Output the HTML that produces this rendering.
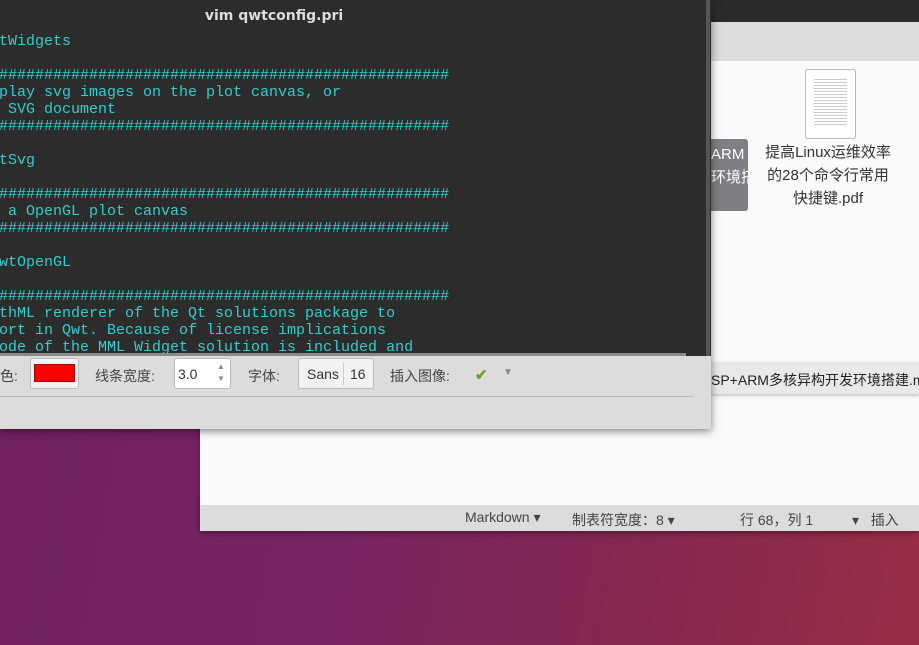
<!DOCTYPE html>
<html><head><meta charset="utf-8"><style>
*{margin:0;padding:0;box-sizing:border-box}
body{width:919px;height:645px;overflow:hidden;position:relative;font-family:"Liberation Sans","Noto Sans CJK SC",sans-serif;background:linear-gradient(100deg,#701f5f 0%,#772462 40%,#86284f 75%,#982f45 100%)}
.abs{position:absolute}
.term{font-family:"Liberation Mono","DejaVu Sans Mono",monospace;font-size:15px;color:#30cfd0;white-space:pre;line-height:17px}
.pt{font-size:14px;color:#444;position:absolute;top:366px}
</style></head><body>
<!-- file manager -->
<div class="abs" style="left:200px;top:0;width:719px;height:531px;background:#fafafa;box-shadow:0 2px 6px rgba(0,0,0,.4)"></div>
<div class="abs" style="left:200px;top:0;width:719px;height:22px;background:#2b2b2b"></div>
<div class="abs" style="left:200px;top:22px;width:719px;height:39px;background:#dcdcdc"></div>
<div class="abs" style="left:711px;top:139px;width:37px;height:72px;background:#7d7f83;border-radius:0 3px 3px 0"></div>
<div class="abs" style="left:711px;top:143px;color:#fff;font-size:15px;line-height:23px;width:37px;overflow:hidden;white-space:nowrap">ARM<br>环境搭</div>
<div class="abs" style="left:805px;top:69px;width:51px;height:70px;background:#fff;border:1px solid #bbb;border-radius:3px">
<div style="margin:7px 8px;height:50px;background:repeating-linear-gradient(#fff 0 2px,#ccc 2px 3px)"></div></div>
<div class="abs" style="left:748px;top:141px;width:160px;text-align:center;font-size:15px;line-height:23px;color:#333">提高Linux运维效率<br>的28个命令行常用<br>快捷键.pdf</div>
<div class="abs" style="left:711px;top:362px;width:208px;height:32px;background:#e9e9e9;box-shadow:0 2px 3px rgba(0,0,0,.2)"></div>
<div class="abs" style="left:711px;top:370px;font-size:14px;color:#222;white-space:nowrap">SP+ARM多核异构开发环境搭建.md</div>
<div class="abs" style="left:200px;top:505px;width:719px;height:26px;background:#dcdcdc"></div>
<div class="abs" style="left:465px;top:509px;font-size:14px;color:#444;white-space:nowrap">Markdown ▾</div>
<div class="abs" style="left:572px;top:510px;font-size:14px;color:#444;white-space:nowrap">制表符宽度：8 ▾</div>
<div class="abs" style="left:740px;top:510px;font-size:14px;color:#444;white-space:nowrap">行 68，列 1</div>
<div class="abs" style="left:852px;top:510px;font-size:14px;color:#444;white-space:nowrap">▾ &nbsp;&nbsp;插入</div>
<!-- terminal window -->
<div class="abs" style="left:0;top:0;width:711px;height:429px;background:#dcdcdc;box-shadow:0 2px 8px rgba(0,0,0,.5)"></div>
<div class="abs" style="left:0;top:0;width:711px;height:356px;background:#2c2c2c"></div>
<div class="abs" style="left:706px;top:0;width:4px;height:356px;background:#555"></div>
<div class="abs" style="left:0;top:8px;width:548px;text-align:center;font-weight:bold;font-size:14px;color:#ddd;font-family:'DejaVu Sans',sans-serif">vim qwtconfig.pri</div>
<div class="abs term" style="left:-1px;top:33px">tWidgets

##################################################
play svg images on the plot canvas, or
 SVG document
##################################################

tSvg

##################################################
 a OpenGL plot canvas
##################################################

wtOpenGL

##################################################
thML renderer of the Qt solutions package to
ort in Qwt. Because of license implications
ode of the MML Widget solution is included and</div>
<div class="abs" style="left:0;top:353px;width:686px;height:3px;background:#8a8a8a"></div>
<div class="abs" style="left:0;top:356px;width:711px;height:73px;background:#dcdcdc"></div>
<div class="pt" style="left:0">色:</div>
<div class="abs" style="left:30px;top:358px;width:49px;height:31px;background:#f2f2f2;border:1px solid #bbb;border-radius:3px"><div style="margin:5px 3px;height:18px;background:#f00;border:1px solid #a00"></div></div>
<div class="pt" style="left:95px">线条宽度:</div>
<div class="abs" style="left:174px;top:358px;width:57px;height:31px;background:#fff;border:1px solid #bbb;border-radius:3px;font-size:14px;color:#333;padding:7px 0 0 3px">3.0<span style="position:absolute;left:42px;top:2px;font-size:8px;color:#888;line-height:12px">▲<br>▼</span></div>
<div class="pt" style="left:248px">字体:</div>
<div class="abs" style="left:298px;top:358px;width:76px;height:31px;background:#f2f2f2;border:1px solid #bbb;border-radius:3px;font-size:14px;color:#333;padding:7px 0 0 8px">Sans<span style="position:absolute;left:44px;top:4px;width:1px;height:22px;background:#ccc"></span><span style="position:absolute;left:51px;top:7px">16</span></div>
<div class="pt" style="left:390px">插入图像:</div>
<div class="abs" style="left:475px;top:366px;color:#6aa329;font-size:15px;font-weight:bold">✔</div>
<div class="abs" style="left:503px;top:367px;color:#888;font-size:10px">▼</div>
<div class="abs" style="left:0;top:396px;width:693px;height:1px;background:#bdbdbd"></div>
</body></html>
